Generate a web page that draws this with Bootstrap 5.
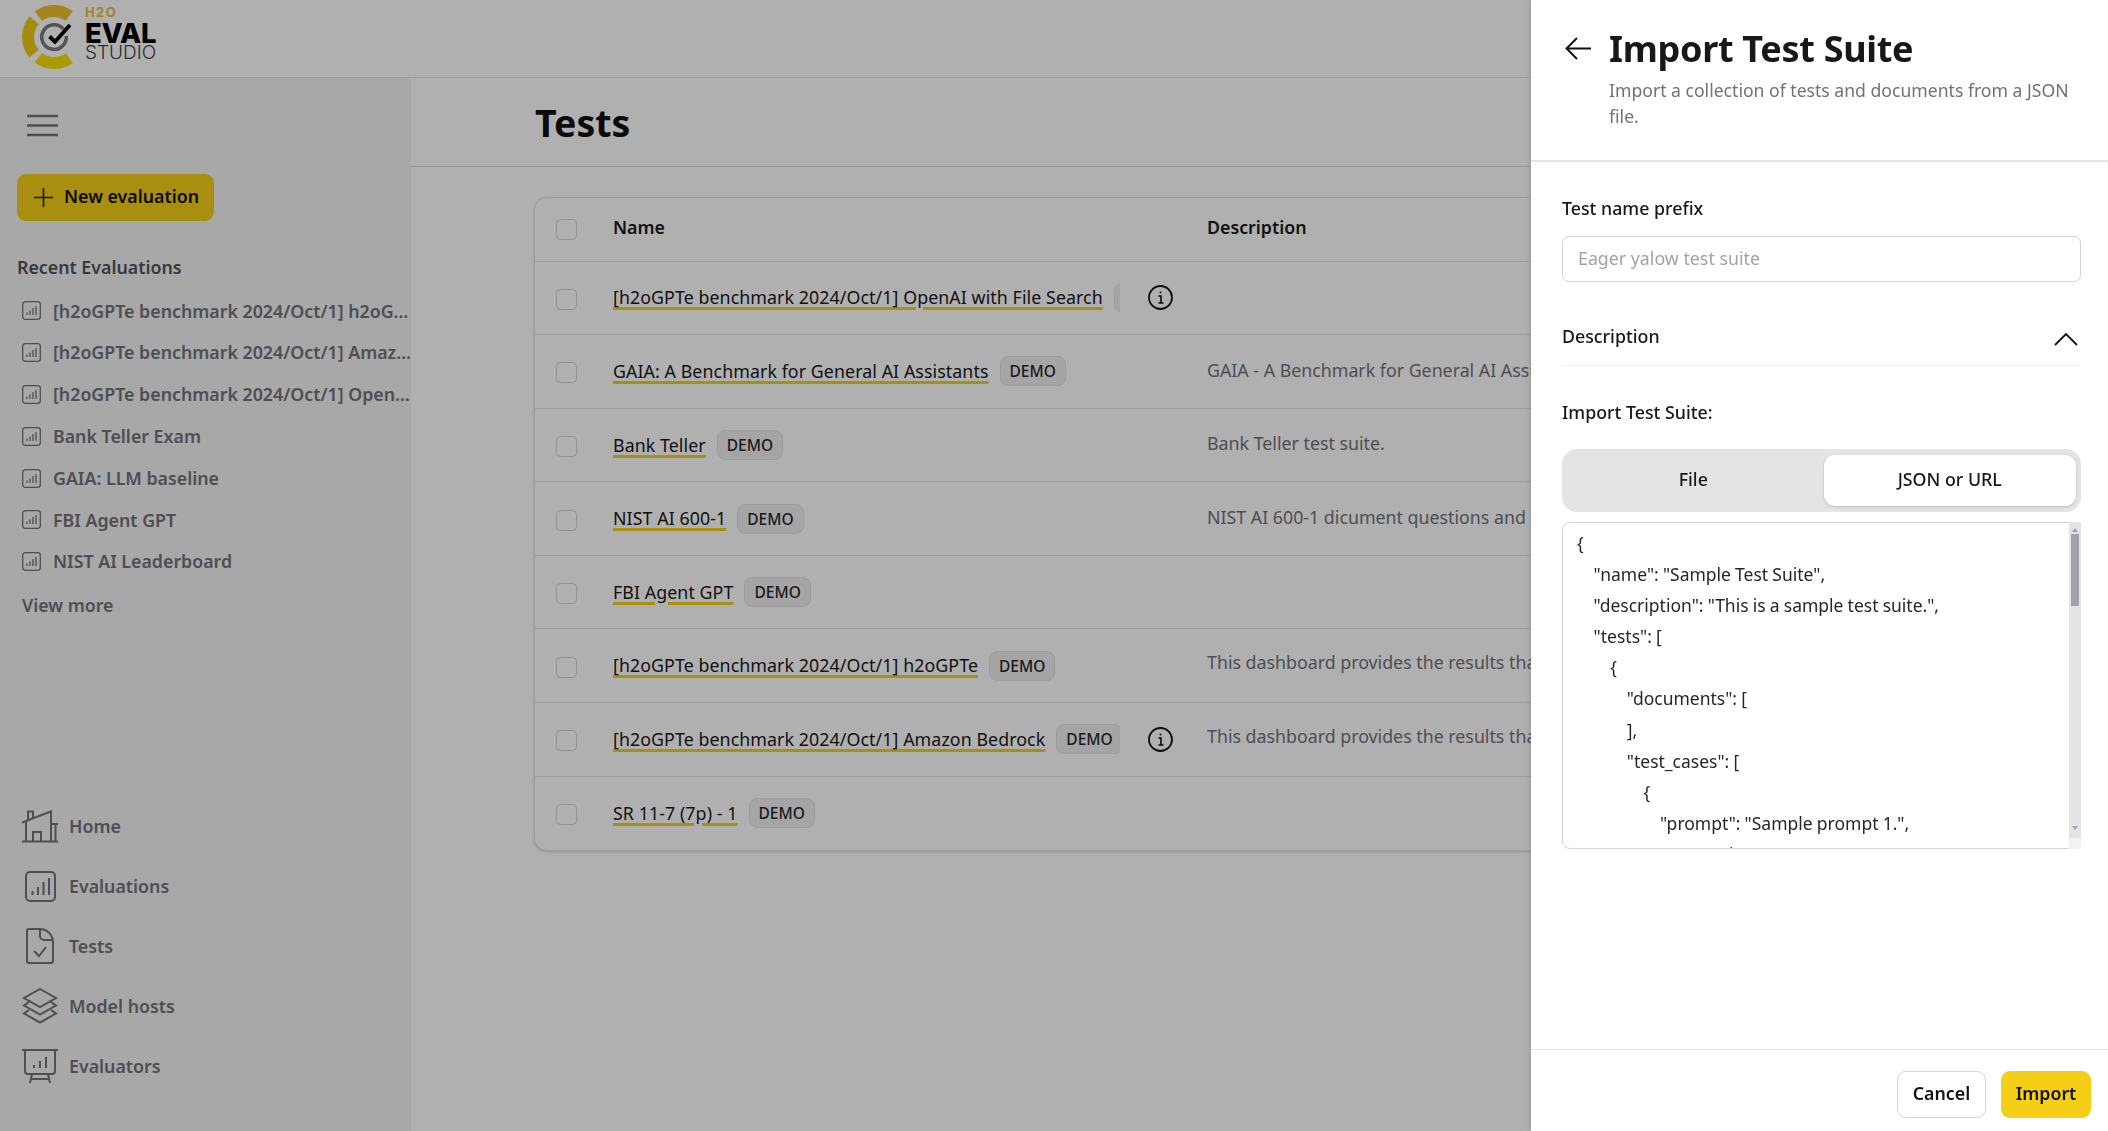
<!DOCTYPE html>
<html lang="en">
<head>
<meta charset="utf-8">
<title>Tests - H2O Eval Studio</title>
<link href="https://cdn.jsdelivr.net/npm/bootstrap@5.3.0/dist/css/bootstrap.min.css" rel="stylesheet">
<style>
:root{--ui:"Noto Sans","Open Sans",sans-serif;}
html,body{height:100%;overflow:hidden;}
body{font-family:var(--ui);font-size:17.8px;color:#18181b;background:#fff;}
.app-top{height:78px;border-bottom:1px solid #e4e4e7;padding-left:22px;}
.logo-mark{margin-bottom:3px;flex:none;}
.logo-type{font-family:"Inter",sans-serif;margin:0 0 9px -1px;}
.logo-h2o{font-size:13px;line-height:13px;font-weight:700;color:#efbe2c;letter-spacing:1.4px;}
.logo-eval{font-size:27.5px;line-height:22px;font-weight:800;color:#000;letter-spacing:-.3px;margin-top:3px;}
.logo-studio{font-size:19px;line-height:18px;font-weight:300;color:#444;}
.app-body{height:1053px;}
.side{width:411px;flex:none;background:#f3f3f3;color:#71717a;font-weight:600;padding-left:17px;}
.burger{margin:36px 0 0 10px;display:block;}
.new-btn{width:197px;height:47px;margin-top:36px;background:#f5cf17;border:0;border-radius:9px;color:#111;font-weight:600;font-size:17.8px;gap:11px;padding:0 0 2px 17px;}
.new-btn svg{margin-top:2px;}
.recent-h{margin-top:34px;color:#52525b;font-weight:600;line-height:24px;}
.rec-list{margin-top:11px;margin-left:5px;}
.rec-item{height:41.8px;gap:12px;}
.rec-item .text-truncate{flex:1;min-width:0;}
.view-more{margin:9px 0 0 5px;line-height:26px;font-weight:600;}
.main-nav{margin-top:auto;margin-left:5px;padding-bottom:35px;}
.nav-row{height:60px;gap:11px;font-weight:600;}
.ico-box{width:36px;display:flex;justify-content:center;flex:none;}
.main-area{flex:1;min-width:0;}
.page-head{height:89px;border-bottom:1px solid #dcdcdc;padding-left:124px;}
.page-head h1{font-size:37.5px;font-weight:700;margin:0;color:#111;}
.tbl-wrap{margin:30px 123px 0;border:1px solid #e4e4e7;border-radius:13px;overflow:hidden;box-shadow:0 1px 3px rgba(0,0,0,.18);background:#fff;}
.tests-tbl{table-layout:fixed;margin:0;--bs-table-bg:transparent;--bs-table-border-color:#e4e4e7;}
.tests-tbl th,.tests-tbl td{padding:0;height:73.6px;vertical-align:middle;white-space:nowrap;}
.tests-tbl thead th{height:63px;font-weight:600;color:#18181b;padding-bottom:3px;}
.tests-tbl tr:last-child td{border-bottom:0;}
.c-check{width:78px;padding-left:21px!important;}
.c-name{width:507px;}
.c-info{width:87px;}
.c-desc{color:#71717a;overflow:hidden;padding-bottom:3px!important;}
.c-desc.lift{padding-bottom:6px!important;}
.box{width:21px;height:21px;margin:3px 0 0 0;border-radius:5px;border:1px solid #d4d4d8;display:block;background-color:transparent;}
.name-clip{overflow:hidden;gap:11px;}
.t-link{color:#18181b;text-decoration:underline;text-decoration-color:#f5cf17;text-decoration-thickness:3px;text-underline-offset:3px;flex:none;letter-spacing:.08px;}
.demo{flex:none;background:#f0f0f0;border:1px solid #e4e4e7;color:#27272a;border-radius:8px;font-size:15.5px;font-weight:500;height:30px;padding:0 9px;line-height:29px;}
.info-ico{margin-left:28px;display:block;}
.offcanvas.panel{--bs-offcanvas-width:577px;border-left:0;box-shadow:-2px 0 6px rgba(0,0,0,.1);}
.offcanvas-backdrop.scrim{background:rgba(0,0,0,.31);opacity:1!important;}
.p-head{height:162px;border-bottom:2px solid #e4e4e7;padding:26px 30px 0 34px;gap:18px;flex:none;}
.p-head h2{font-size:36px;font-weight:700;margin:0;line-height:46px;color:#18181b;letter-spacing:-.3px;}
.p-head p{margin:5px 0 0;line-height:26px;color:#71717a;font-size:17.6px;}
.back-ico{margin-top:11px;flex:none;}
.p-body{padding:0 27px 0 31px;flex:1;}
.lbl{font-weight:500;margin:0;color:#18181b;line-height:24px;}
.lbl-top{margin-top:34px;}
.name-input{margin-top:16px;height:46px;border-radius:7px;border-color:#d4d4d8;font-size:17.8px;padding:0 15px 3px;}
.name-input::placeholder{color:#a1a1aa;}
.desc-row{margin-top:29px;height:55px;border-bottom:1px solid #f0f0f2;padding:13px 3px 0 0;}
.chev{margin-top:8px;}
.lbl-imp{margin-top:34px;}
.seg{margin-top:25px;background:#e4e4e7;border-radius:15px;padding:6px 5px;height:63px;gap:4px;}
.seg .btn{flex:1 1 0;border:0;border-radius:11px;font-weight:500;font-size:17.8px;color:#18181b;padding:0 0 3px;}
.seg .btn.on{background:#fff;box-shadow:0 1px 3px rgba(0,0,0,.18);}
.json-wrap{margin-top:10px;height:327px;}
.json-box{height:100%;border-radius:8px;border-color:#d4d4d8;padding:5px 0 0 14px;font-size:17.5px;line-height:31.1px;color:#27272a;white-space:pre;word-spacing:-.4px;overflow:hidden;resize:none;}
.json-box:focus{border-color:#d4d4d8;box-shadow:none;}
.fake-bar{top:0;right:0;bottom:0;width:12px;background:#e4e4e7;}
.fake-thumb{position:absolute;top:12px;left:2px;width:8px;height:72px;background:#a1a1aa;}
.fake-up,.fake-down{position:absolute;left:3px;width:0;height:0;border:3px solid transparent;}
.fake-up{top:3px;border-bottom:4px solid #a1a1aa;}
.fake-down{bottom:16px;border-top:4px solid #a1a1aa;}
.fake-grip{position:absolute;left:0;right:0;bottom:0;height:11px;background:#f2f2f3;}
.p-foot{height:82px;flex:none;border-top:1px solid #e4e4e7;padding:21px 17px 0 0;gap:15px;}
.p-foot .btn{height:47px;font-weight:600;font-size:17.8px;border-radius:9px;color:#111;padding:0 0 2px;}
.btn-cancel{width:89px;border:1px solid #d4d4d8;background:#fff;}
.btn-import{width:90px;border:0;background:#f5cf17;}
</style>
</head>
<body>
<header class="app-top d-flex align-items-center">
  <svg class="logo-mark" width="64" height="64" viewBox="0 0 64 64" aria-hidden="true">
    <g fill="none" stroke-width="12">
      <path d="M16.35 11.24A26 26 0 0 1 47.28 10.97" stroke="#efc02a"/>
      <path d="M12.1 15.3A26 26 0 0 0 12.1 48.7" stroke="#eecb14"/>
      <path d="M16.35 52.76A26 26 0 0 0 47.28 53.03" stroke="#f6e000"/>
    </g>
    <path d="M41.4 24.1A12.3 12.3 0 1 0 44.3 31" fill="none" stroke="#7a7a7a" stroke-width="3.6"/>
    <path d="M27.500 31.500l5.500 5.200L48 20" fill="none" stroke="#000" stroke-width="3.800"/>
  </svg>
  <div class="logo-type">
    <div class="logo-h2o">H2O</div>
    <div class="logo-eval">EVAL</div>
    <div class="logo-studio">STUDIO</div>
  </div>
</header>
<div class="app-body d-flex">
  <aside class="side d-flex flex-column">
    <svg class="burger" width="32" height="24" viewBox="0 0 32 24" aria-hidden="true"><path d="M0 2h31M0 11.5h31M0 21h31" stroke="#71717a" stroke-width="2.4" fill="none"/></svg>
    <button class="btn new-btn d-flex align-items-center" type="button">
      <svg width="19" height="19" viewBox="0 0 19 19" aria-hidden="true"><path d="M9.5 0v19M0 9.5h19" stroke="#222" stroke-width="1.6"/></svg>
      New evaluation
    </button>
    <div class="recent-h">Recent Evaluations</div>
    <div class="rec-list">
      <div class="rec-item d-flex align-items-center"><svg width="19" height="19" viewBox="0 0 19 19" aria-hidden="true"><rect x=".7" y=".7" width="17.6" height="17.6" rx="2.5" fill="none" stroke="#71717a" stroke-width="1.3"/><path d="M5 14v-2.5M8 14V9.5M11 14V7M14 14V5" stroke="#71717a" stroke-width="1.3"/></svg><span class="text-truncate">[h2oGPTe benchmark 2024/Oct/1] h2oGPTe baseline</span></div>
      <div class="rec-item d-flex align-items-center"><svg width="19" height="19" viewBox="0 0 19 19" aria-hidden="true"><rect x=".7" y=".7" width="17.6" height="17.6" rx="2.5" fill="none" stroke="#71717a" stroke-width="1.3"/><path d="M5 14v-2.5M8 14V9.5M11 14V7M14 14V5" stroke="#71717a" stroke-width="1.3"/></svg><span class="text-truncate">[h2oGPTe benchmark 2024/Oct/1] Amazon Bedrock</span></div>
      <div class="rec-item d-flex align-items-center"><svg width="19" height="19" viewBox="0 0 19 19" aria-hidden="true"><rect x=".7" y=".7" width="17.6" height="17.6" rx="2.5" fill="none" stroke="#71717a" stroke-width="1.3"/><path d="M5 14v-2.5M8 14V9.5M11 14V7M14 14V5" stroke="#71717a" stroke-width="1.3"/></svg><span class="text-truncate">[h2oGPTe benchmark 2024/Oct/1] OpenAI with File Search</span></div>
      <div class="rec-item d-flex align-items-center"><svg width="19" height="19" viewBox="0 0 19 19" aria-hidden="true"><rect x=".7" y=".7" width="17.6" height="17.6" rx="2.5" fill="none" stroke="#71717a" stroke-width="1.3"/><path d="M5 14v-2.5M8 14V9.5M11 14V7M14 14V5" stroke="#71717a" stroke-width="1.3"/></svg><span class="text-truncate">Bank Teller Exam</span></div>
      <div class="rec-item d-flex align-items-center"><svg width="19" height="19" viewBox="0 0 19 19" aria-hidden="true"><rect x=".7" y=".7" width="17.6" height="17.6" rx="2.5" fill="none" stroke="#71717a" stroke-width="1.3"/><path d="M5 14v-2.5M8 14V9.5M11 14V7M14 14V5" stroke="#71717a" stroke-width="1.3"/></svg><span class="text-truncate">GAIA: LLM baseline</span></div>
      <div class="rec-item d-flex align-items-center"><svg width="19" height="19" viewBox="0 0 19 19" aria-hidden="true"><rect x=".7" y=".7" width="17.6" height="17.6" rx="2.5" fill="none" stroke="#71717a" stroke-width="1.3"/><path d="M5 14v-2.5M8 14V9.5M11 14V7M14 14V5" stroke="#71717a" stroke-width="1.3"/></svg><span class="text-truncate">FBI Agent GPT</span></div>
      <div class="rec-item d-flex align-items-center"><svg width="19" height="19" viewBox="0 0 19 19" aria-hidden="true"><rect x=".7" y=".7" width="17.6" height="17.6" rx="2.5" fill="none" stroke="#71717a" stroke-width="1.3"/><path d="M5 14v-2.5M8 14V9.5M11 14V7M14 14V5" stroke="#71717a" stroke-width="1.3"/></svg><span class="text-truncate">NIST AI Leaderboard</span></div>
    </div>
    <div class="view-more">View more</div>
    <nav class="main-nav">
      <div class="nav-row d-flex align-items-center"><span class="ico-box"><svg width="36" height="33" viewBox="0 0 36 33" fill="none" stroke="#71717a" stroke-width="2" aria-hidden="true"><path d="M0 31.5h36M4 31.5V11M0 12.5L30 1M6 10V1.5h5v6M29 1v30.5M33.500 31.500V14M28 14h8M11 31.500V22h8v9.500"/></svg></span>Home</div>
      <div class="nav-row d-flex align-items-center"><span class="ico-box"><svg width="31" height="31" viewBox="0 0 31 31" fill="none" stroke="#71717a" stroke-width="2" aria-hidden="true"><rect x="1" y="1" width="29" height="29" rx="4"/><path d="M7.500 24v-4M13 24v-8M18.500 24V11M24 24V7"/></svg></span>Evaluations</div>
      <div class="nav-row d-flex align-items-center"><span class="ico-box"><svg width="28" height="36" viewBox="0 0 28 36" fill="none" stroke="#71717a" stroke-width="2" aria-hidden="true"><path d="M3 1h11c7 0 13 6 13 13v19a2 2 0 0 1-2 2H3a2 2 0 0 1-2-2V3a2 2 0 0 1 2-2zM14 1v7a4 4 0 0 0 4 4h9M8 23l5 5 7-9"/></svg></span>Tests</div>
      <div class="nav-row d-flex align-items-center"><span class="ico-box"><svg width="36" height="36" viewBox="0 0 36 36" fill="none" stroke="#71717a" stroke-width="2" aria-hidden="true"><path d="M18 1l16 9-16 9-16-9zM7 14l-5 3.500 16 9 16-9-5-3.500M7 22l-5 3.500 16 9 16-9-5-3.500"/></svg></span>Model hosts</div>
      <div class="nav-row d-flex align-items-center"><span class="ico-box"><svg width="36" height="34" viewBox="0 0 36 34" fill="none" stroke="#71717a" stroke-width="2" aria-hidden="true"><path d="M0 1h36M3 1v21a3 3 0 0 0 3 3h24a3 3 0 0 0 3-3V1M12 19v-3M18 19v-7M24 19V8M10 25l-2 9M26 25l2 9M9 30h18"/></svg></span>Evaluators</div>
    </nav>
  </aside>
  <main class="main-area">
    <div class="page-head d-flex align-items-center"><h1>Tests</h1></div>
    <div class="tbl-wrap">
      <table class="table tests-tbl">
        <thead><tr><th class="c-check"><input class="form-check-input box" type="checkbox" aria-label="All"></th><th class="c-name">Name</th><th class="c-info"></th><th>Description</th></tr></thead>
        <tbody>
          <tr><td class="c-check"><input class="form-check-input box" type="checkbox" aria-label="Select"></td><td class="c-name"><div class="name-clip d-flex align-items-center"><a class="t-link" href="#">[h2oGPTe benchmark 2024/Oct/1] OpenAI with File Search</a><span class="demo badge">DEMO</span></div></td><td class="c-info"><svg class="info-ico" width="25" height="25" viewBox="0 0 25 25" fill="none" stroke="#111" aria-hidden="true"><circle cx="12.500" cy="12.500" r="11.500" stroke-width="1.800"/><path d="M10.500 11h2.500v7M10.500 18h5" stroke-width="1.600"/><circle cx="12.500" cy="7.500" r="1" fill="#111" stroke="none"/></svg></td><td class="c-desc"></td></tr>
          <tr><td class="c-check"><input class="form-check-input box" type="checkbox" aria-label="Select"></td><td class="c-name"><div class="name-clip d-flex align-items-center"><a class="t-link" href="#">GAIA: A Benchmark for General AI Assistants</a><span class="demo badge">DEMO</span></div></td><td class="c-info"></td><td class="c-desc">GAIA - A Benchmark for General AI Assistants is a test suite of questions</td></tr>
          <tr><td class="c-check"><input class="form-check-input box" type="checkbox" aria-label="Select"></td><td class="c-name"><div class="name-clip d-flex align-items-center"><a class="t-link" href="#">Bank Teller</a><span class="demo badge">DEMO</span></div></td><td class="c-info"></td><td class="c-desc">Bank Teller test suite.</td></tr>
          <tr><td class="c-check"><input class="form-check-input box" type="checkbox" aria-label="Select"></td><td class="c-name"><div class="name-clip d-flex align-items-center"><a class="t-link" href="#">NIST AI 600-1</a><span class="demo badge">DEMO</span></div></td><td class="c-info"></td><td class="c-desc">NIST AI 600-1 dicument questions and answers test suite</td></tr>
          <tr><td class="c-check"><input class="form-check-input box" type="checkbox" aria-label="Select"></td><td class="c-name"><div class="name-clip d-flex align-items-center"><a class="t-link" href="#">FBI Agent GPT</a><span class="demo badge">DEMO</span></div></td><td class="c-info"></td><td class="c-desc"></td></tr>
          <tr><td class="c-check"><input class="form-check-input box" type="checkbox" aria-label="Select"></td><td class="c-name"><div class="name-clip d-flex align-items-center"><a class="t-link" href="#">[h2oGPTe benchmark 2024/Oct/1] h2oGPTe</a><span class="demo badge">DEMO</span></div></td><td class="c-info"></td><td class="c-desc lift">This dashboard provides the results that were obtained</td></tr>
          <tr><td class="c-check"><input class="form-check-input box" type="checkbox" aria-label="Select"></td><td class="c-name"><div class="name-clip d-flex align-items-center"><a class="t-link" href="#">[h2oGPTe benchmark 2024/Oct/1] Amazon Bedrock</a><span class="demo badge">DEMO</span></div></td><td class="c-info"><svg class="info-ico" width="25" height="25" viewBox="0 0 25 25" fill="none" stroke="#111" aria-hidden="true"><circle cx="12.500" cy="12.500" r="11.500" stroke-width="1.800"/><path d="M10.500 11h2.500v7M10.500 18h5" stroke-width="1.600"/><circle cx="12.500" cy="7.500" r="1" fill="#111" stroke="none"/></svg></td><td class="c-desc lift">This dashboard provides the results that were obtained</td></tr>
          <tr><td class="c-check"><input class="form-check-input box" type="checkbox" aria-label="Select"></td><td class="c-name"><div class="name-clip d-flex align-items-center"><a class="t-link" href="#">SR 11-7 (7p) - 1</a><span class="demo badge">DEMO</span></div></td><td class="c-info"></td><td class="c-desc"></td></tr>
        </tbody>
      </table>
    </div>
  </main>
</div>
<div class="offcanvas-backdrop scrim"></div>
<aside class="offcanvas offcanvas-end show panel d-flex flex-column" tabindex="-1" data-bs-backdrop="false" data-bs-scroll="true">
  <div class="p-head d-flex">
    <svg class="back-ico" width="26" height="23" viewBox="0 0 26 23" fill="none" stroke="#111" stroke-width="1.900" aria-hidden="true"><path d="M26 11.500H1.500M12 1L1.500 11.500 12 22"/></svg>
    <div>
      <h2>Import Test Suite</h2>
      <p>Import a collection of tests and documents from a JSON file.</p>
    </div>
  </div>
  <div class="p-body">
    <label class="lbl lbl-top d-block" for="prefix">Test name prefix</label>
    <input id="prefix" class="form-control name-input" placeholder="Eager yalow test suite">
    <div class="desc-row d-flex justify-content-between">
      <span class="lbl">Description</span>
      <svg class="chev" width="24" height="14" viewBox="0 0 24 14" fill="none" stroke="#111" stroke-width="1.800" aria-hidden="true"><path d="M1 13L12 2l11 11"/></svg>
    </div>
    <div class="lbl lbl-imp">Import Test Suite:</div>
    <div class="seg d-flex">
      <button class="btn" type="button">File</button>
      <button class="btn on" type="button">JSON or URL</button>
    </div>
    <div class="json-wrap position-relative">
      <textarea class="form-control json-box" aria-label="JSON" spellcheck="false">{
    "name": "Sample Test Suite",
    "description": "This is a sample test suite.",
    "tests": [
        {
            "documents": [
            ],
            "test_cases": [
                {
                    "prompt": "Sample prompt 1.",
                    "categories": [
                        "question_answering"
                    ],
                    "relationships": [],
                    "expected_output": "Sample answer 1.",
                    "condition": "",
                    "key": ""
                }
            ]
        }
    ]
}</textarea>
      <div class="fake-bar position-absolute" aria-hidden="true"><span class="fake-up"></span><span class="fake-thumb"></span><span class="fake-down"></span><span class="fake-grip"></span></div>
    </div>
  </div>
  <div class="p-foot d-flex justify-content-end">
    <button class="btn btn-cancel" type="button">Cancel</button>
    <button class="btn btn-import" type="button">Import</button>
  </div>
</aside>
<script src="https://cdn.jsdelivr.net/npm/bootstrap@5.3.0/dist/js/bootstrap.bundle.min.js"></script>
</body>
</html>
